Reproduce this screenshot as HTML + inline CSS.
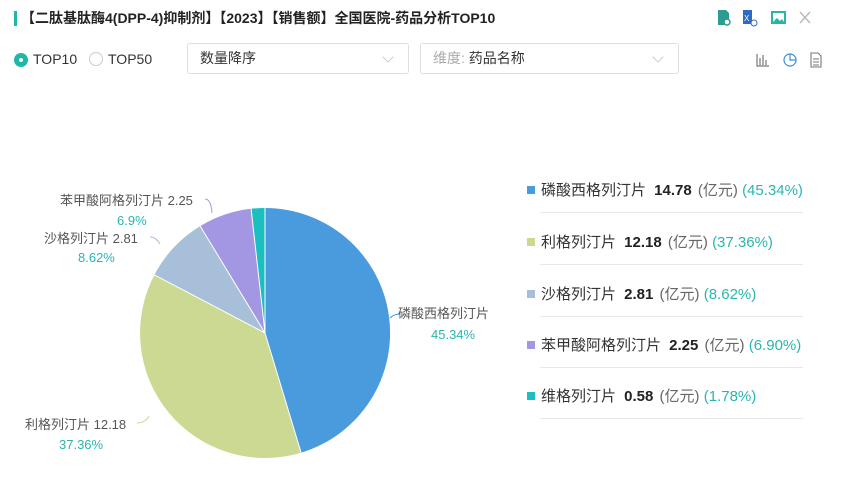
<!DOCTYPE html>
<html><head><meta charset="utf-8"><style>
body{margin:0;width:863px;height:487px;background:#fff;font-family:"Liberation Sans","Noto Sans CJK SC",sans-serif;position:relative;overflow:hidden;color:#333}
.a{position:absolute;white-space:nowrap}
.sel{position:absolute;border:1px solid #dcdfe6;border-radius:3px;height:31px;box-sizing:border-box;font-size:14px;line-height:29px;padding-left:12px;color:#333}
.chev{position:absolute;right:16px;top:9px;width:7px;height:7px;border-right:1px solid #ccc;border-bottom:1px solid #ccc;transform:rotate(45deg)}
.lg{position:absolute;left:527px;font-size:15px;color:#333;white-space:nowrap}
.lg i{display:inline-block;width:8px;height:8px;margin-right:6px;vertical-align:1px}
.lg b{color:#222;margin:0 2px 0 4px}
.lg .u{color:#666}.lg .p{color:#2bb5b0}
.hr{position:absolute;left:540px;width:263px;height:1px;background:#e8e8e8}
</style></head><body>
<div class="a" style="left:14px;top:11px;width:3px;height:15px;background:#1fb8a8"></div>
<div class="a" style="left:21px;top:8px;font-size:14px;font-weight:bold;color:#222">【二肽基肽酶4(DPP-4)抑制剂】【2023】【销售额】全国医院-药品分析TOP10</div>
<svg class="a" style="left:716px;top:9px" width="100" height="20">
<path d="M2 1h8l3 3v12H2z" fill="#2a9d8f"/><circle cx="11" cy="13" r="3" fill="#fff" stroke="#2a9d8f" stroke-width="1.5"/>
<rect x="27" y="1" width="9" height="14" fill="#2f6bc4"/><text x="28" y="12" font-size="8" fill="#fff" font-family="Liberation Sans">X</text><circle cx="38" cy="14" r="3" fill="#fff" stroke="#2f6bc4"/>
<rect x="55" y="2" width="15" height="13" fill="#2bb5a0"/><rect x="57" y="4" width="11" height="9" fill="#fff"/><path d="M57 13l4-4 3 3 2-2 2 3z" fill="#2bb5a0"/>
<path d="M84 3l10 11M94 3L84 14" stroke="#bbb" stroke-width="1.5"/></svg>
<div class="a" style="left:14px;top:53px;width:14px;height:14px;border-radius:50%;background:#1fb8a8"></div>
<div class="a" style="left:19px;top:58px;width:4px;height:4px;border-radius:50%;background:#fff"></div>
<div class="a" style="left:33px;top:51px;font-size:14px">TOP10</div>
<div class="a" style="left:89px;top:52px;width:14px;height:14px;border-radius:50%;border:1px solid #ccc;box-sizing:border-box"></div>
<div class="a" style="left:108px;top:51px;font-size:14px">TOP50</div>
<div class="sel" style="left:187px;top:43px;width:222px">数量降序<span class="chev"></span></div>
<div class="sel" style="left:420px;top:43px;width:259px"><span style="color:#aaa">维度:</span> 药品名称<span class="chev"></span></div>
<svg class="a" style="left:755px;top:52px" width="70" height="16">
<path d="M2 2v12h12M5 13V6M8 13V3M11 13V8" stroke="#777" fill="none" stroke-width="1.2"/>
<circle cx="35" cy="8" r="6" stroke="#3b8fd4" fill="none" stroke-width="1.2"/><path d="M35 2v6h6" stroke="#3b8fd4" fill="none" stroke-width="1.2"/>
<path d="M56 1h7l3 3v11H56zM58 7h6M58 10h6M58 13h6" stroke="#777" fill="none" stroke-width="1.1"/></svg>
<svg class="a" style="left:0;top:0" width="490" height="487" font-family="Liberation Sans, Noto Sans CJK SC, sans-serif" font-size="13">
<path d="M265 333L265 208A125 125 0 0 1 301.1 452.7Z" fill="#4a9ade"/>
<path d="M265 333L301.1 452.7A125 125 0 0 1 154.4 274.9Z" fill="#cbd993"/>
<path d="M265 333L154.4 274.9A125 125 0 0 1 200.2 226.1Z" fill="#a7bfd8"/>
<path d="M265 333L200.2 226.1A125 125 0 0 1 251.1 208.8Z" fill="#a396e3"/>
<path d="M265 333L251.1 208.8A125 125 0 0 1 265 208Z" fill="#1cbfc0"/>
<g stroke="#fff" stroke-width="1"><path d="M265 333L265 208M265 333L301.1 452.7M265 333L154.4 274.9M265 333L200.2 226.1M265 333L251.1 208.8"/></g>
<path d="M390 318q4 -4 10 -4" stroke="#4a9ade" fill="none"/>
<path d="M137 423q8 0 12 -7" stroke="#cbd993" fill="none"/>
<path d="M150 237q6 0 10 7" stroke="#a7bfd8" fill="none"/>
<path d="M205 199q6 0 7 14" stroke="#a396e3" fill="none"/>
<text x="398" y="318" fill="#555">磷酸西格列汀片 14.78</text><text x="431" y="339" fill="#2bb5b0">45.34%</text>
<text x="25" y="429" fill="#555">利格列汀片 12.18</text><text x="59" y="449" fill="#2bb5b0">37.36%</text>
<text x="44" y="243" fill="#555">沙格列汀片 2.81</text><text x="78" y="262" fill="#2bb5b0">8.62%</text>
<text x="60" y="205" fill="#555">苯甲酸阿格列汀片 2.25</text><text x="117" y="225" fill="#2bb5b0">6.9%</text>
</svg>
<div class="lg" style="top:179px"><i style="background:#4a9ade"></i>磷酸西格列汀片 <b>14.78</b> <span class="u">(亿元)</span> <span class="p">(45.34%)</span></div>
<div class="hr" style="top:212px"></div>
<div class="lg" style="top:231px"><i style="background:#cbd993"></i>利格列汀片 <b>12.18</b> <span class="u">(亿元)</span> <span class="p">(37.36%)</span></div>
<div class="hr" style="top:264px"></div>
<div class="lg" style="top:283px"><i style="background:#a7bfd8"></i>沙格列汀片 <b>2.81</b> <span class="u">(亿元)</span> <span class="p">(8.62%)</span></div>
<div class="hr" style="top:316px"></div>
<div class="lg" style="top:334px"><i style="background:#a396e3"></i>苯甲酸阿格列汀片 <b>2.25</b> <span class="u">(亿元)</span> <span class="p">(6.90%)</span></div>
<div class="hr" style="top:367px"></div>
<div class="lg" style="top:385px"><i style="background:#1cbfc0"></i>维格列汀片 <b>0.58</b> <span class="u">(亿元)</span> <span class="p">(1.78%)</span></div>
<div class="hr" style="top:418px"></div>
</body></html>
